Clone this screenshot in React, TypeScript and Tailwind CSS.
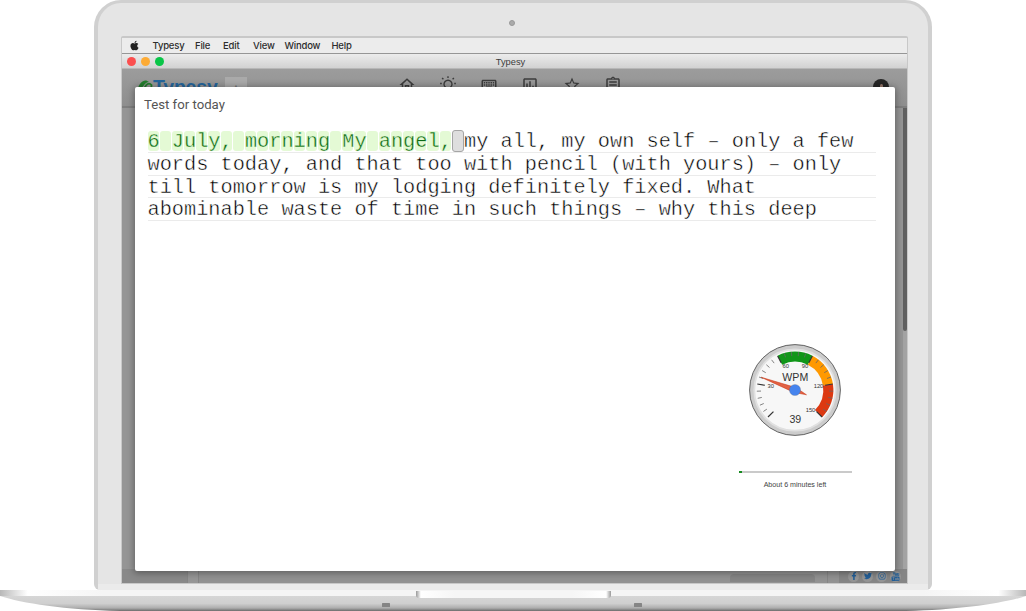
import React from "react";
import {
  MdOutlineHome,
  MdOutlineKeyboard,
  MdOutlineAssessment,
  MdStarBorder,
  MdOutlineAssignment,
} from "react-icons/md";
import { FaApple, FaFacebookF, FaTwitter, FaInstagram } from "react-icons/fa";

const typed = "6 July, morning My angel,";
const rest = "my all, my own self – only a few";
const lines = [
  "words today, and that too with pencil (with yours) – only",
  "till tomorrow is my lodging definitely fixed. What",
  "abominable waste of time in such things – why this deep",
];

const CX = 46;
const CY = 46;

function polar(value: number, r: number): [number, number] {
  const a = ((-135 + (value / 150) * 270) * Math.PI) / 180;
  return [CX + r * Math.sin(a), CY - r * Math.cos(a)];
}

function band(from: number, to: number): string {
  const [a, b] = polar(from, 38.4);
  const [c, d] = polar(to, 38.4);
  const [e, f] = polar(to, 28.3);
  const [g, h] = polar(from, 28.3);
  return `M${a} ${b}A38.4 38.4 0 0 1 ${c} ${d}L${e} ${f}A28.3 28.3 0 0 0 ${g} ${h}Z`;
}

function Tick({ value }: { value: number }) {
  const major = value % 30 === 0;
  const [x1, y1] = polar(value, major ? 30.5 : 34);
  const [x2, y2] = polar(value, 38.2);
  return (
    <line x1={x1} y1={y1} x2={x2} y2={y2} stroke={major ? "#333" : "#666"} strokeWidth={major ? 1.2 : 0.8} />
  );
}

const ticks = Array.from({ length: 26 }, (_, i) => i * 6);

function Gauge() {
  return (
    <svg className="h-[92px] w-[92px]" viewBox="0 0 92 92" fontFamily="Liberation Sans, Arial, sans-serif" textAnchor="middle" fill="#333">
      <circle cx="46" cy="46" r="45.4" fill="#ccc" stroke="#555" strokeWidth="0.9" />
      <circle cx="46" cy="46" r="40.7" fill="#f7f7f7" stroke="#e0e0e0" strokeWidth="1.8" />
      <path d={band(60, 90)} fill="#109618" />
      <path d={band(90, 120)} fill="#ff9900" />
      <path d={band(120, 150)} fill="#dc3912" />
      {ticks.map((t) => (
        <Tick key={t} value={t} />
      ))}
      <g fontSize="5.8">
        <text x="21.7" y="44">30</text>
        <text x="36.7" y="23.8">60</text>
        <text x="56" y="23.8">90</text>
        <text x="69.5" y="44">120</text>
        <text x="61.5" y="68.4">150</text>
      </g>
      <text x="46.3" y="36.6" fontSize="10.6">WPM</text>
      <text x="46.3" y="78.8" fontSize="10.6">39</text>
      <path d="M12 33.2L46.9 43.6L57.5 50.8L45 48.4Z" fill="#dc3912" fillOpacity="0.78" stroke="#c63310" strokeWidth="0.5" />
      <circle cx="46" cy="46" r="5.6" fill="#4684ee" stroke="#666" strokeOpacity="0.5" strokeWidth="0.5" />
    </svg>
  );
}

function SunIcon() {
  return (
    <svg className="mt-[6px] h-[18px] w-[18px]" viewBox="0 0 18 18" fill="none" stroke="currentColor" strokeWidth="1.4">
      <path d="M6.5 14.5V12.3A4 4 0 1 1 11.5 12.3V14.5Z" />
      <path d="M9 1.2V3M3.1 3L4.4 4.3M14.9 3L13.6 4.3M1.1 8.5H2.8M15.2 8.5H16.9" />
    </svg>
  );
}

function YouTubeIcon() {
  return (
    <svg className="h-[9px] w-[9px]" viewBox="0 0 18 18" fill="none" stroke="currentColor" strokeWidth="1.6">
      <path d="M4 0L6 4V7M8 0L6 4M9 3H11V7H9ZM13 2V7H15.5V2" />
      <rect x="1" y="9" width="16" height="9" rx="2" fill="currentColor" stroke="none" />
      <path d="M3 11H7M5 11V16M9 12V16H11V12M13 11V16H15V13H13" stroke="#959595" strokeWidth="1" />
    </svg>
  );
}

function MenuBar() {
  return (
    <div className="flex h-[15px] shrink-0 items-center bg-[#ececec] font-['Inter',sans-serif] text-[9.5px] font-medium leading-none tracking-[-0.2px] text-[#2d2d2d]">
      <FaApple className="ml-[7px] h-[11px] w-[11px] text-[#222]" />
      <span className="ml-[12.5px] w-[42.5px]">Typesy</span>
      <span className="w-[28px]">File</span>
      <span className="w-[30px]">Edit</span>
      <span className="w-[31.5px]">View</span>
      <span className="w-[47px]">Window</span>
      <span>Help</span>
    </div>
  );
}

function TitleBar() {
  return (
    <div className="flex h-4 shrink-0 items-center border-y border-t-[#969696] border-b-[#b7b7b7] bg-linear-to-b from-[#ececec] to-[#d2d2d2]">
      <div className="flex w-[60px] gap-[5px] pl-[5px]">
        <span className="h-[9px] w-[9px] rounded-full bg-[#fb4f4f]" />
        <span className="h-[9px] w-[9px] rounded-full bg-[#fdab35]" />
        <span className="h-[9px] w-[9px] rounded-full bg-[#09c547]" />
      </div>
      <span className="flex-1 pt-[3px] pr-[68px] text-center font-['Liberation_Sans',Arial,sans-serif] text-[9.3px] leading-none text-[#3c3c3c]">
        Typesy
      </span>
    </div>
  );
}

function AppHeader() {
  return (
    <div className="flex h-[39px] shrink-0 items-start border-b-2 border-[#7e7e7e] bg-linear-to-b from-[#9c9c9c] to-[#8e8e8e] text-[#3c3c3c]">
      <svg className="mt-[10px] ml-[15px] h-4 w-4" viewBox="0 0 16 16" fill="none">
        <path d="M1 10C2 3 8-1 12 3C8 3 7 7 3 11Z" fill="#237d2c" />
        <path d="M7 12C8 5 12 3 14.5 6L14 12" stroke="#237d2c" strokeWidth="1.8" />
      </svg>
      <span className="mt-[8px] w-[72px] font-['Liberation_Sans',sans-serif] text-[19.5px] font-bold leading-[20px] tracking-[-0.2px] text-[#25659b]">
        Typesy
      </span>
      <span className="mt-[8px] flex h-[20px] w-[22px] items-center justify-center bg-[#aaaaaa] text-[9px] text-[#777]">▲</span>
      <div className="ml-[150.5px] flex gap-[23.3px]">
        <MdOutlineHome className="mt-[7px] h-[18px] w-[18px]" />
        <SunIcon />
        <MdOutlineKeyboard className="mt-[7px] h-[18px] w-[18px]" />
        <MdOutlineAssessment className="mt-[7px] h-[18px] w-[18px]" />
        <MdStarBorder className="mt-[7px] h-[18px] w-[18px]" />
        <MdOutlineAssignment className="mt-[7px] h-[18px] w-[18px]" />
      </div>
      <span className="mt-[10px] mr-[18px] ml-auto flex h-4 w-4 justify-center rounded-full bg-[#262626] pt-[5px]">
        <span className="h-2 w-[3px] rounded-full bg-[#98796b]" />
      </span>
    </div>
  );
}

function AppFooter() {
  return (
    <div className="flex h-[14px] shrink-0 items-center bg-[#929292] text-[#235f98]">
      <span className="h-full w-[66px] border-r border-[#858585] bg-[#898989]" />
      <span className="h-full w-[11px] border-r border-[#858585] bg-[#969696]" />
      <span className="mt-1 ml-[531px] h-[8px] w-[85px] rounded-t bg-[#858585]" />
      <span className="ml-[12px] h-full w-3 border-l border-[#858585]" />
      <div className="flex h-full flex-1 items-center gap-[3px] bg-[#858585] pl-[9px]">
        <span className="flex h-[11px] w-[11px] items-center justify-center rounded-full bg-[#959595]"><FaFacebookF size={8} /></span>
        <span className="flex h-[11px] w-[11px] items-center justify-center rounded-full bg-[#959595]"><FaTwitter size={8} /></span>
        <span className="flex h-[11px] w-[11px] items-center justify-center rounded-full bg-[#959595]"><FaInstagram size={8} /></span>
        <span className="flex h-[11px] w-[11px] items-center justify-center rounded-full bg-[#959595]"><YouTubeIcon /></span>
      </div>
    </div>
  );
}

function TestDialog() {
  return (
    <div className="absolute top-[18px] left-[13px] flex h-[484px] w-[760px] flex-col rounded-[2px] bg-white shadow-[0_1px_7px_1px_rgba(0,0,0,0.35)]">
      <h1 className="mt-[9px] ml-[9px] font-['Roboto',sans-serif] text-[13.2px] leading-[18px] text-[#555]">Test for today</h1>
      <div className="mt-[16px] ml-[12.5px] w-[728px] font-['Liberation_Mono',monospace] text-[20.3px] leading-[22px] text-black [-webkit-text-stroke:0.45px_#fff]">
        <div className="flex h-[23px] border-b border-[#ebebeb] whitespace-pre">
          {typed.split("").map((c, i) => (
            <span key={i} className="mt-px flex h-5 w-[12.18px] pr-px">
              <span className="h-5 w-full rounded-[3px] bg-[#e4fad5] leading-[21px] text-[#0a6a14] [-webkit-text-stroke:0.4px_#e4fad5]">
                {c}
              </span>
            </span>
          ))}
          <span className="h-[22px] w-[12.18px] rounded-[3px] border border-[#a5a5a5] bg-[#dedede]" />
          <span className="mt-px leading-[21px]">{rest}</span>
        </div>
        {lines.map((line) => (
          <div key={line} className="h-[22.7px] border-b border-[#ebebeb] leading-[23px] whitespace-pre">
            {line}
          </div>
        ))}
      </div>
      <div className="mt-[123px] mr-[43px] flex w-[114px] flex-col items-center self-end">
        <Gauge />
        <div className="mt-[35px] h-[2px] w-[113px] bg-[#cacaca]">
          <div className="h-full w-[3px] bg-[#168b20]" />
        </div>
        <span className="mt-[8px] font-['Liberation_Sans',Arial,sans-serif] text-[7.1px] leading-[9px] text-[#444]">
          About 6 minutes left
        </span>
      </div>
    </div>
  );
}

function LaptopBase() {
  return (
    <svg className="h-[21px] w-[1026px] shrink-0" viewBox="0 0 1026 21">
      <defs>
        <linearGradient id="edge">
          <stop offset="0" stopColor="#b8b8b8" />
          <stop offset="0.027" stopColor="#fff" />
          <stop offset="0.1" stopColor="#f5f5f5" />
          <stop offset="0.9" stopColor="#f5f5f5" />
          <stop offset="0.973" stopColor="#fff" />
          <stop offset="1" stopColor="#b8b8b8" />
        </linearGradient>
        <linearGradient id="under" x1="0" y1="6" x2="0" y2="21" gradientUnits="userSpaceOnUse">
          <stop offset="0" stopColor="#d6d6d6" />
          <stop offset="0.5" stopColor="#cfcfcf" />
          <stop offset="0.8" stopColor="#adadad" />
          <stop offset="1" stopColor="#6c6c6c" />
        </linearGradient>
        <linearGradient id="notch">
          <stop offset="0" stopColor="#999" />
          <stop offset="0.025" stopColor="#fff" />
          <stop offset="0.2" stopColor="#f6f6f6" />
          <stop offset="0.8" stopColor="#f6f6f6" />
          <stop offset="0.975" stopColor="#fff" />
          <stop offset="1" stopColor="#999" />
        </linearGradient>
      </defs>
      <rect y="0" width="1026" height="6" fill="url(#edge)" />
      <path d="M0 6H1026C1005 13 960 20 906 21H120C66 20 21 13 0 6Z" fill="url(#under)" />
      <path d="M416 1H611V5Q611 8 608 8H419Q416 8 416 5Z" fill="url(#notch)" />
      <rect x="382" y="13" width="8" height="4" rx="0.5" fill="#858585" />
      <rect x="634" y="13" width="8" height="4" rx="0.5" fill="#858585" />
    </svg>
  );
}

export default function App() {
  return (
    <div className="flex h-[611px] w-[1026px] flex-col overflow-hidden bg-white">
      <div className="ml-[94px] flex h-[590px] w-[838px] shrink-0 flex-col rounded-t-[27px] rounded-b-[6px] border-x-4 border-t-3 border-[#d0d0d0] bg-[#e5e5e5]">
        <div className="flex h-[33px] shrink-0 items-center justify-center pt-[7px] pr-[3px]">
          <span className="h-[6px] w-[6px] rounded-full border border-[#999] bg-[#aaa]" />
        </div>
        <div className="ml-[23px] flex h-[548px] w-[787px] shrink-0 flex-col rounded-t-[2px] border-x border-t-2 border-b border-[#c8c8c8] bg-[#959595]">
          <MenuBar />
          <TitleBar />
          <div className="relative flex flex-1 flex-col">
            <AppHeader />
            <div className="flex flex-1 justify-end">
              <div className="w-[4px] bg-[#a3a3a3]">
                <div className="h-[223px] rounded-b bg-[#606060]" />
              </div>
            </div>
            <AppFooter />
            <TestDialog />
          </div>
        </div>
        <div className="flex-1 bg-[#ebebeb]" />
      </div>
      <LaptopBase />
    </div>
  );
}
